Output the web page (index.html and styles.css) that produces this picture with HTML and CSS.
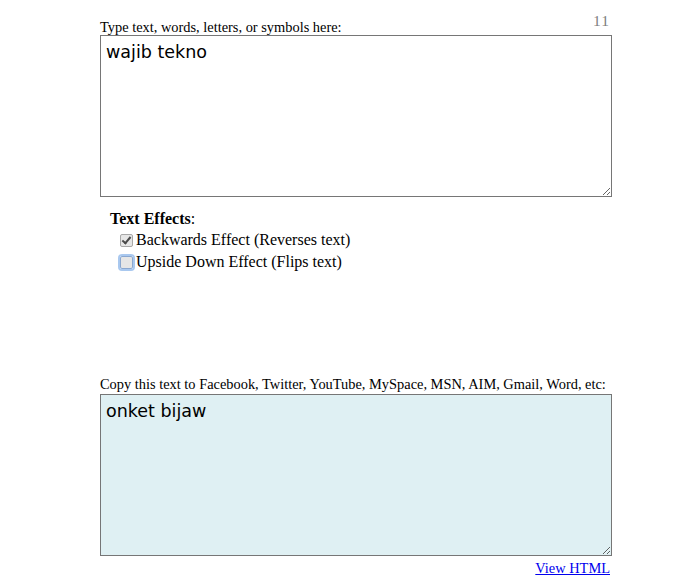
FILE: index.html
```html
<!DOCTYPE html>
<html>
<head>
<meta charset="utf-8">
<link rel="stylesheet" href="styles.css">
</head>
<body>
<div class="wrap">
  <div class="head-row">
    <label class="label" for="src">Type text, words, letters, or symbols here:</label>
    <span class="counter">11</span>
  </div>
  <textarea id="src" class="box" spellcheck="true">wajib tekno</textarea>

  <div class="effects">
    <div class="effects-title"><b>Text Effects</b>:</div>
    <label class="opt"><input type="checkbox" checked class="chk chk-on">Backwards Effect (Reverses text)</label>
    <label class="opt"><input type="checkbox" class="chk chk-focus">Upside Down Effect (Flips text)</label>
  </div>

  <div class="spacer"></div>

  <div class="label copy-label">Copy this text to Facebook, Twitter, YouTube, MySpace, MSN, AIM, Gmail, Word, etc:</div>
  <textarea class="box out" spellcheck="false">onket bijaw</textarea>
  <div class="link-row"><a href="#" class="link">View HTML</a></div>
</div>
</body>
</html>
```

FILE: styles.css
```css
html, body {
  margin: 0;
  padding: 0;
  background: #ffffff;
}
body {
  font-family: "Liberation Serif", "Times New Roman", serif;
  color: #000;
}
.wrap {
  width: 512px;
  margin-left: 100px;
  padding-top: 13px;
  display: flex;
  flex-direction: column;
}
.head-row {
  display: flex;
  justify-content: space-between;
  align-items: flex-end;
  height: 22px;
}
.label {
  font-size: 14.4px;
  line-height: 16px;
}
.counter {
  font-size: 15.5px;
  color: #808080;
  line-height: 16px;
  margin-right: 2px;
  align-self: flex-start;
  letter-spacing: 1px;
}
.box {
  display: block;
  box-sizing: border-box;
  width: 512px;
  height: 162px;
  margin: 0;
  border: 1px solid #767676;
  padding: 6px 5px;
  font-family: "DejaVu Sans", Verdana, sans-serif;
  font-size: 17.5px;
  line-height: 20px;
  color: #000;
  background: #fff;
  resize: both;
  outline: none;
}
.out {
  background: #dff0f3;
}
.effects {
  padding-left: 10px;
  padding-top: 13px;
  display: flex;
  flex-direction: column;
  font-size: 16px;
  line-height: 22px;
}
.effects-title {
  line-height: 18px;
  margin-bottom: 1px;
}
.opt {
  display: flex;
  align-items: center;
  padding-left: 9px;
  height: 22px;
}
.chk {
  -webkit-appearance: none;
  appearance: none;
  box-sizing: border-box;
  width: 13px;
  height: 13px;
  margin: 0 3px 0 1px;
  border: 1px solid #a8a8a8;
  border-radius: 2px;
  background: #e6e6e6;
  position: relative;
}
.chk-on::after {
  content: "";
  position: absolute;
  left: 3px;
  top: 0px;
  width: 3px;
  height: 7px;
  border-right: 2px solid #4a4a4a;
  border-bottom: 2px solid #4a4a4a;
  transform: rotate(40deg);
}
.chk-focus {
  outline: 2px solid #a9c8ef;
  outline-offset: 0;
  border-color: #8aa7cf;
}
.spacer {
  height: 103px;
}
.copy-label {
  height: 18px;
}
.link-row {
  display: flex;
  justify-content: flex-end;
  padding-top: 4px;
  padding-right: 2px;
}
.link {
  font-size: 14.4px;
  color: #0000ee;
  text-decoration: underline;
}
```
